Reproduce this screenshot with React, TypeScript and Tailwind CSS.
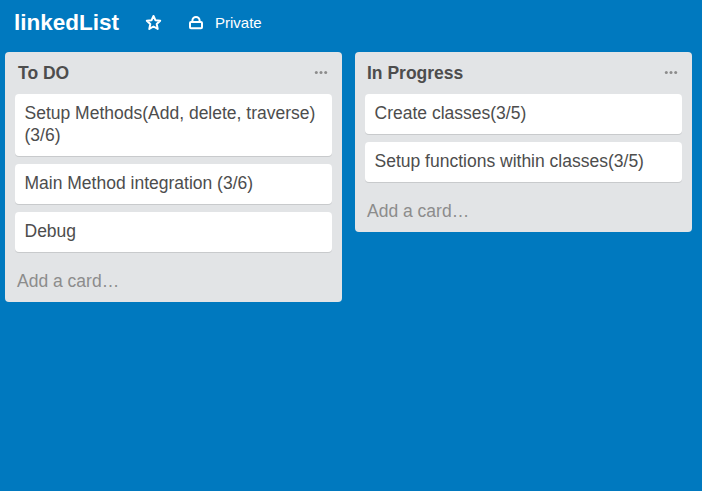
import React from 'react';

type ListData = { title: string; cards: string[]; inset: string };

const lists: ListData[] = [
  {
    title: 'To DO',
    cards: ['Setup Methods(Add, delete, traverse) (3/6)', 'Main Method integration (3/6)', 'Debug'],
    inset: 'pl-[13px]',
  },
  {
    title: 'In Progress',
    cards: ['Create classes(3/5)', 'Setup functions within classes(3/5)'],
    inset: 'pl-3',
  },
];

function Dots() {
  return (
    <svg width="14" height="4" viewBox="0 0 14 4" fill="#8c8c8c">
      <circle cx="2.3" cy="1.6" r="1.5" />
      <circle cx="7" cy="1.6" r="1.5" />
      <circle cx="11.7" cy="1.6" r="1.5" />
    </svg>
  );
}

function List({ title, cards, inset }: ListData) {
  return (
    <section className="w-[337px] rounded-[4px] bg-[#e2e4e6] text-[17.5px] leading-[22px]">
      <header className={`flex h-[42px] items-center justify-between pr-[14px] ${inset}`}>
        <h2 className="font-bold text-[#4d4d4d]">{title}</h2>
        <Dots />
      </header>
      <div className="flex flex-col gap-2 px-[10px]">
        {cards.map((card) => (
          <div
            key={card}
            className="rounded-[4px] bg-white pt-2 pr-2 pb-[10px] pl-[9.5px] text-[#4d4d4d] shadow-[0_1px_0_#c8cacc]"
          >
            {card}
          </div>
        ))}
      </div>
      <div className="px-3 pt-[18px] pb-[10px] text-[#8c8c8c]">Add a card…</div>
    </section>
  );
}

export default function App() {
  return (
    <main className="h-screen overflow-hidden bg-[#0079bf] font-['Liberation_Sans',Arial,sans-serif]">
      <div className="flex h-[52px] items-start text-white">
        <h1 className="mt-[9px] ml-[14px] w-[131px] text-[22.5px] leading-7 font-bold">linkedList</h1>
        <svg className="mt-[14px]" width="17" height="17" viewBox="0 0 17 17" fill="none" stroke="white" strokeWidth="2" strokeLinejoin="round">
          <path d="M8.5 2 10.4 6.2 15.2 6.7 11.7 10 12.7 14.9 8.5 12.5 4.3 14.9 5.3 10 1.8 6.7 6.6 6.2Z" />
        </svg>
        <svg className="mt-[14px] ml-[26px]" width="16" height="17" viewBox="0 0 16 17" fill="none" stroke="white" strokeWidth="2">
          <path d="M4.4 7.8V6.5a3.6 3.6 0 0 1 7.2 0V7.8" />
          <rect x="2" y="8" width="12" height="6.2" rx="1" />
        </svg>
        <span className="mt-[13px] ml-[11px] text-[15px] leading-5">Private</span>
      </div>
      <div className="flex items-start gap-[13px] pl-[5px]">
        {lists.map((list) => (
          <List key={list.title} {...list} />
        ))}
      </div>
    </main>
  );
}
